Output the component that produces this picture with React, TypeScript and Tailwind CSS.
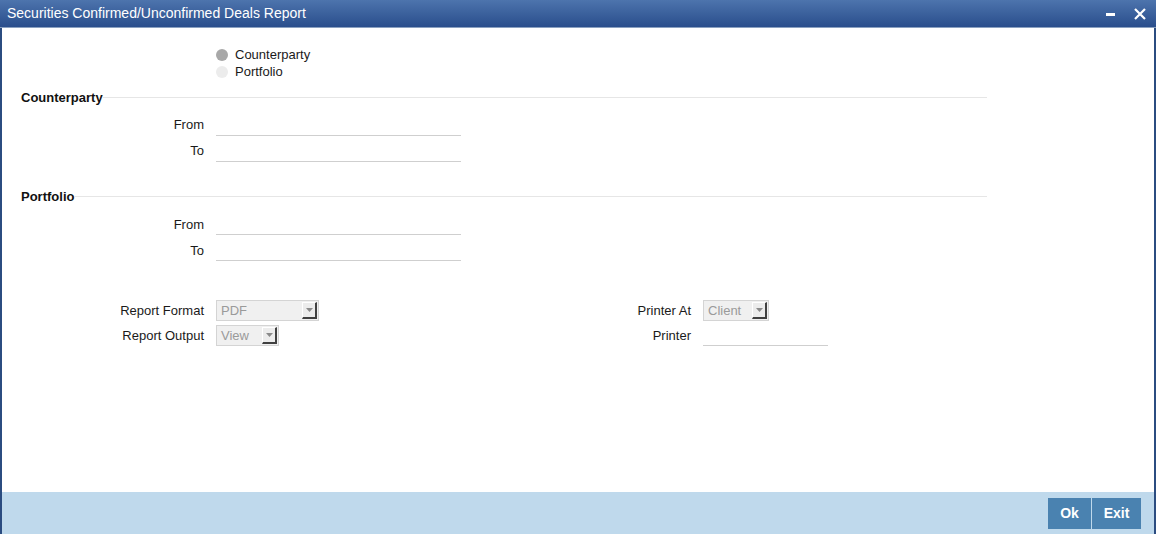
import React from "react";

const font = { fontFamily: '"Liberation Sans", Arial, sans-serif' };

function Select({ value, width }: { value: string; width: string }) {
  return (
    <div className={`flex h-[21px] ${width} items-center justify-between border border-[#d4d4d4] bg-[#f0f0f0] pl-[4px] pr-[1px]`}>
      <span className="text-[13px] text-[#9a9a9a]">{value}</span>
      <div className="flex h-[17px] w-[15px] items-center justify-center border-t border-l border-t-white border-l-white border-r-2 border-b-2 border-r-[#404040] border-b-[#404040] bg-[#ececec]">
        <svg width="7" height="4" viewBox="0 0 7 4">
          <path d="M0 0h7L3.5 4z" fill="#8a8a8a" />
        </svg>
      </div>
    </div>
  );
}

function FieldRow({ label }: { label: string }) {
  return (
    <div className="flex h-[26px] items-end">
      <div className="w-[202px] pb-[1px] text-right text-[13px] text-[#1a1a1a]">{label}</div>
      <div className="ml-[12px] h-[1px] w-[245px] bg-[#cfcfcf]" />
    </div>
  );
}

function Section({ title }: { title: string }) {
  return (
    <div className="flex w-[985px] items-center pl-[19px]">
      <span className="text-[13px] font-bold text-[#111]">{title}</span>
      <div className="h-[1px] flex-1 bg-[#e6e6e6]" />
    </div>
  );
}

export default function App() {
  return (
    <div className="h-[541px] w-[1156px] bg-white" style={font}>
      <div className="flex h-[534px] flex-col">
        <div className="flex h-[28px] items-center justify-between border-b border-[#8aa0c0] bg-gradient-to-b from-[#4d74ad] to-[#2a4e8c] pl-[7px] pr-[10px]">
          <span className="text-[14px] text-white">Securities Confirmed/Unconfirmed Deals Report</span>
          <div className="flex items-center gap-[19px]">
            <div className="mt-[2px] h-[3px] w-[9px] bg-white" />
            <svg width="12" height="12" viewBox="0 0 12 12">
              <path d="M1 1L11 11M11 1L1 11" stroke="white" strokeWidth="2.2" />
            </svg>
          </div>
        </div>
        <div className="flex flex-1 flex-col border-x-2 border-[#2b4c80]">
          <div className="flex-1">
            <div className="flex flex-col pl-[214px] pt-[18px]">
              <div className="flex h-[17px] items-center gap-[7px]">
                <div className="h-[12px] w-[12px] rounded-full bg-[#a8a8a8]" />
                <span className="text-[13px] text-[#1a1a1a]">Counterparty</span>
              </div>
              <div className="flex h-[17px] items-center gap-[7px]">
                <div className="h-[12px] w-[12px] rounded-full bg-[#ececec]" />
                <span className="text-[13px] text-[#1a1a1a]">Portfolio</span>
              </div>
            </div>
            <div className="mt-[8px]">
              <Section title="Counterparty" />
            </div>
            <div className="mt-[2px]">
              <FieldRow label="From" />
              <FieldRow label="To" />
            </div>
            <div className="mt-[25px]">
              <Section title="Portfolio" />
            </div>
            <div className="mt-[3px]">
              <FieldRow label="From" />
              <FieldRow label="To" />
            </div>
            <div className="mt-[39px] flex">
              <div className="flex flex-col gap-[4px]">
                <div className="flex items-center">
                  <div className="w-[202px] text-right text-[13px] text-[#1a1a1a]">Report Format</div>
                  <div className="ml-[12px]">
                    <Select value="PDF" width="w-[103px]" />
                  </div>
                </div>
                <div className="flex items-center">
                  <div className="w-[202px] text-right text-[13px] text-[#1a1a1a]">Report Output</div>
                  <div className="ml-[12px]">
                    <Select value="View" width="w-[63px]" />
                  </div>
                </div>
              </div>
              <div className="ml-[170px] flex flex-col gap-[4px]">
                <div className="flex items-center">
                  <div className="w-[202px] text-right text-[13px] text-[#1a1a1a]">Printer At</div>
                  <div className="ml-[12px]">
                    <Select value="Client" width="w-[66px]" />
                  </div>
                </div>
                <div className="flex h-[21px] items-end">
                  <div className="w-[202px] self-center text-right text-[13px] text-[#1a1a1a]">Printer</div>
                  <div className="ml-[12px] h-[1px] w-[125px] bg-[#cfcfcf]" />
                </div>
              </div>
            </div>
          </div>
          <div className="flex h-[42px] items-center justify-end gap-[1px] bg-[#bfd9ec] pr-[13px]">
            <button className="h-[31px] w-[43px] bg-[#4a82b0] text-[14px] font-bold text-white">Ok</button>
            <button className="h-[31px] w-[49px] bg-[#4a82b0] text-[14px] font-bold text-white">Exit</button>
          </div>
        </div>
      </div>
    </div>
  );
}
